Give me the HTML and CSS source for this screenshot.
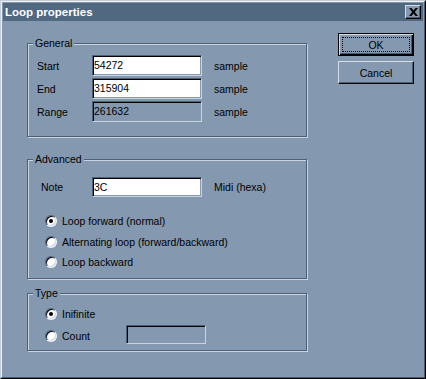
FILE: index.html
```html
<!DOCTYPE html>
<html lang="en">
<head>
  <meta charset="UTF-8">
  <title>Loop properties</title>
  <link rel="stylesheet" href="styles.css">
</head>
<body>
  <div class="window">
    <div class="frame">
      <div class="titlebar">
        <span class="title">Loop properties</span>
        <button class="close">
          <svg width="9" height="8" viewBox="0 0 9 8">
            <path d="M0 0h2.5l2 2.5 2-2.5H9L5.8 4 9 8H6.5l-2-2.5-2 2.5H0l3.2-4z" fill="#000"/>
          </svg>
        </button>
      </div>

      <div class="dialog">
        <div class="groups">
          <div class="group general">
            <span class="group-title">General</span>
            <div class="field">
              <span class="label">Start</span>
              <div class="edit">54272</div>
              <span class="unit">sample</span>
            </div>
            <div class="field">
              <span class="label">End</span>
              <div class="edit">315904</div>
              <span class="unit">sample</span>
            </div>
            <div class="field">
              <span class="label">Range</span>
              <div class="edit disabled">261632</div>
              <span class="unit">sample</span>
            </div>
          </div>

          <div class="group advanced">
            <span class="group-title">Advanced</span>
            <div class="field note">
              <span class="label">Note</span>
              <div class="edit">3C</div>
              <span class="unit">Midi (hexa)</span>
            </div>
            <div class="radios">
              <div class="option"><span class="radio checked"></span>Loop forward (normal)</div>
              <div class="option"><span class="radio"></span>Alternating loop (forward/backward)</div>
              <div class="option"><span class="radio"></span>Loop backward</div>
            </div>
          </div>

          <div class="group type">
            <span class="group-title">Type</span>
            <div class="option"><span class="radio checked"></span>Inifinite</div>
            <div class="option count">
              <span class="radio"></span><span class="count-label">Count</span>
              <div class="edit disabled small"></div>
            </div>
          </div>
        </div>

        <div class="buttons">
          <button class="btn default">OK</button>
          <button class="btn">Cancel</button>
        </div>
      </div>
    </div>
  </div>
</body>
</html>
```

FILE: styles.css
```css
body {
  margin: 0;
  background: #8499b0;
  font-family: "Liberation Sans", Arial, sans-serif;
  font-size: 10.5px;
  color: #000;
}

.window {
  width: 426px;
  height: 379px;
  box-sizing: border-box;
  border: 1px solid;
  border-color: #c4ced8 #000 #000 #c4ced8;
}

.frame {
  height: 100%;
  box-sizing: border-box;
  border: 1px solid;
  border-color: #eef2f6 #485a6e #485a6e #eef2f6;
  padding: 1px;
  background: #8499b0;
}

.titlebar {
  display: flex;
  align-items: center;
  justify-content: space-between;
  height: 18px;
  background: #506880;
  padding: 0 2px 0 2px;
}

.title {
  color: #fff;
  font-weight: bold;
  font-size: 11.5px;
  line-height: 18px;
}

.close {
  width: 16px;
  height: 14px;
  padding: 0;
  margin: 0;
  display: flex;
  align-items: center;
  justify-content: center;
  background: #8499b0;
  border: 1px solid;
  border-color: #d4dde6 #000 #000 #d4dde6;
  box-shadow: inset -1px -1px 0 #4c6078;
}

.dialog {
  display: flex;
  padding: 12px 0 0 24px;
}

.groups {
  width: 280px;
  margin-top: 10px;
}

.group {
  position: relative;
  box-sizing: border-box;
  border: 1px solid #4c6078;
  box-shadow: 1px 1px 0 #c8d4e0, inset 1px 1px 0 #c8d4e0;
  padding-left: 9px;
}

.group-title {
  position: absolute;
  top: -7px;
  left: 5px;
  padding: 0 2px;
  line-height: 13px;
  background: #8499b0;
}

.general {
  padding-top: 11px;
  padding-bottom: 14px;
}

.advanced {
  margin-top: 22px;
  padding-top: 17px;
  padding-bottom: 6px;
}

.type {
  margin-top: 14px;
  padding-top: 10px;
  padding-bottom: 4px;
}

.field {
  display: flex;
  align-items: center;
  height: 21px;
  margin-bottom: 2px;
}

.field:last-child {
  margin-bottom: 0;
}

.label {
  width: 55px;
}

.note {
  height: 20px;
}

.note .label {
  width: 51px;
  margin-left: 4px;
}

.edit {
  box-sizing: border-box;
  width: 110px;
  height: 100%;
  padding-left: 1px;
  line-height: 17px;
  background: #fff;
  border: 1px solid;
  border-color: #4c6078 #c8d4e0 #c8d4e0 #4c6078;
  box-shadow: inset 1px 1px 0 #000, inset -1px -1px 0 #8499b0;
  padding-top: 1px;
}

.edit.disabled {
  background: #8499b0;
}

.unit {
  margin-left: 12px;
}

.radios {
  margin-top: 14px;
}

.option {
  display: flex;
  align-items: center;
  height: 20px;
  margin-bottom: 1px;
  margin-left: 8px;
}

.radios .option:last-child {
  margin-bottom: 0;
}

.radios .option:nth-child(2) {
  margin-bottom: 0;
}

.type .option {
  margin-bottom: 2px;
}

.type .option:last-child {
  margin-bottom: 0;
}

.radio {
  box-sizing: border-box;
  width: 12px;
  height: 12px;
  margin-right: 5px;
  border-radius: 50%;
  background: #fff;
  border: 1px solid;
  border-color: #4c6078 #eef2f6 #eef2f6 #4c6078;
  box-shadow: inset 1px 1px 0 #000, inset -1px -1px 0 #c8d4e0;
  display: flex;
  align-items: center;
  justify-content: center;
}

.radio.checked::after {
  content: "";
  width: 4px;
  height: 4px;
  border-radius: 50%;
  background: #000;
}

.count-label {
  width: 64px;
}

.edit.small {
  width: 80px;
  height: 19px;
  margin-bottom: 4px;
}

.buttons {
  display: flex;
  flex-direction: column;
  gap: 5px;
  margin-left: 31px;
}

.btn {
  width: 76px;
  height: 23px;
  padding: 0;
  font-family: inherit;
  font-size: 10.5px;
  color: #000;
  background: #8499b0;
  border: 1px solid;
  border-color: #d4dde6 #000 #000 #d4dde6;
  box-shadow: inset -1px -1px 0 #4c6078;
}

.btn.default {
  border-color: #000;
  box-shadow: inset 1px 1px 0 #d4dde6, inset -1px -1px 0 #000, inset -2px -2px 0 #4c6078;
  outline: 1px dotted #000;
  outline-offset: -5px;
}
```
